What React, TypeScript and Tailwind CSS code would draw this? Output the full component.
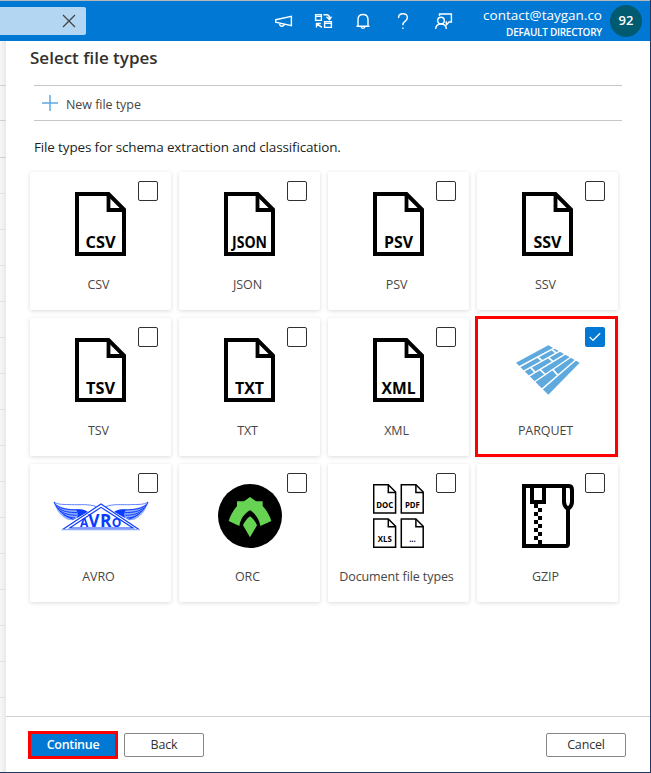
import React from "react";

const iconFont = '"Open Sans", "Noto Sans", sans-serif';

function DocIcon({ text, width }: { text: string; width: number }) {
  return (
    <svg width="51" height="64" viewBox="0 0 51 64" fill="none" stroke="#000" strokeWidth="4">
      <path d="M2 2H33.5L49 17.5V62H2Z" />
      <path d="M33.5 2V18H49" strokeWidth="3.8" />
      <text x="25.5" y="56" textAnchor="middle" textLength={width} lengthAdjust="spacingAndGlyphs" fill="#000" stroke="none" fontSize="15.5" fontWeight="700" fontFamily={iconFont}>
        {text}
      </text>
    </svg>
  );
}

function ParquetIcon() {
  return (
    <svg width="64" height="50" viewBox="573 104 192 150">
      <path d="M573 157L670 105L764 157L670 253Z" fill="#5ea9dd" />
      <g stroke="#fff" strokeWidth="4.5">
        <path d="M582 170L690 112M595 183L707 121M611 198L723 130M628 215L738 140M650 237L752 149" />
        <path d="M638 140L652 152M680 117L694 128M617 171L631 187M670 141L684 154M645 177L662 194M683 177L699 195" strokeWidth="5" />
      </g>
    </svg>
  );
}

function AvroWing() {
  return (
    <g>
      <path d="M87 128C100 137 118 135 140 136C165 137 192 133 214 142" fill="none" stroke="#3d6bff" strokeWidth="2.5" />
      <path d="M86 127C92 151 106 171 128 181L144 183L188 158C178 149 166 149 152 150C130 150 103 145 86 127Z" fill="#8eabff" />
      <path d="M152 150C168 148 180 151 188 157L156 176C160 166 158 157 152 150Z" fill="#0a3cff" />
      <path d="M87 128C98 152 116 170 145 180M94 138C110 150 128 150 154 152M98 145C116 158 132 159 156 160M106 155C124 167 138 167 155 168M116 166C130 174 140 175 151 176" fill="none" stroke="#0a3cff" strokeWidth="3" />
    </g>
  );
}

function AvroIcon() {
  return (
    <svg className="overflow-visible" width="96" height="30" viewBox="84 125 288 90">
      <AvroWing />
      <g transform="translate(456 0) scale(-1 1)">
        <AvroWing />
      </g>
      <path d="M228 132L110 212H344Z" fill="#fff" />
      <path d="M112 211L228 134L343 211" fill="none" stroke="#0a3cff" strokeWidth="3.5" />
      <path d="M110 211H344" stroke="#8eabff" strokeWidth="4" />
      <path d="M134 206L228 144L324 206Z" fill="#fff" stroke="#0a3cff" strokeWidth="3.5" />
      <text y="203" fill="#0a3cff" fontFamily={iconFont} fontWeight="700">
        <tspan x="165" fontSize="36">A</tspan>
        <tspan x="190" fontSize="52">V</tspan>
        <tspan x="225" fontSize="52">R</tspan>
        <tspan x="260" fontSize="36">O</tspan>
      </text>
    </svg>
  );
}

function OrcIcon() {
  return (
    <svg className="ml-px" width="64" height="64" viewBox="54 72 192 192">
      <circle cx="150" cy="168" r="96" fill="#000" />
      <path d="M150 111L168 124H188V138C200 151 209 166 214 183L181 198C178 178 167 161 150 151C132 161 121 178 118 198L86 183C91 166 100 151 111 138V124H132Z" fill="#66d352" />
      <path d="M150 169C160 177 168 187 171 196L150 232L129 196C132 187 140 177 150 169Z" fill="#66d352" />
    </svg>
  );
}

const miniDocs = [
  { x: 0, y: 0, text: "DOC", width: 17 },
  { x: 27.6, y: 0, text: "PDF", width: 15 },
  { x: 0, y: 34.3, text: "XLS", width: 14 },
  { x: 27.6, y: 34.3, text: "...", width: 6.5 },
];

function DocumentsIcon() {
  return (
    <svg width="51" height="64" viewBox="0 0 51 64" fill="none" stroke="#000" strokeWidth="1.5">
      {miniDocs.map((d) => (
        <g key={d.text} transform={`translate(${d.x} ${d.y})`}>
          <path d="M.7 .7H15.3L22.6 8V29H.7Z" />
          <path d="M15.3 .7V8.4H22.6" />
          <text x="11.8" y="23.7" textAnchor="middle" textLength={d.width} lengthAdjust="spacingAndGlyphs" fill="#000" stroke="none" fontSize="8" fontWeight="700" fontFamily={iconFont}>
            {d.text}
          </text>
        </g>
      ))}
    </svg>
  );
}

function GzipIcon() {
  return (
    <svg className="ml-px" width="52" height="64" viewBox="591 72 156 192" fill="none" stroke="#000" strokeWidth="12">
      <path d="M729 148V252Q729 258 723 258H597V78H732Q741 78 741 90V126Q741 138 729 147Q717 138 717 126V80" />
      <path d="M621 78V126H657V78" />
      <path
        d="M627 132h12v12h-12zM639 144h12v12h-12zM627 156h12v12h-12zM639 168h12v12h-12zM627 180h12v12h-12zM639 192h12v12h-12zM627 204h12v12h-12zM639 216h12v12h-12zM627 228h12v12h-12zM639 240h12v12h-12z"
        fill="#000"
        stroke="none"
      />
    </svg>
  );
}

type FileType = { label: string; icon: React.ReactNode; checked?: boolean };

const fileTypes: FileType[] = [
  { label: "CSV", icon: <DocIcon text="CSV" width={30} /> },
  { label: "JSON", icon: <DocIcon text="JSON" width={35} /> },
  { label: "PSV", icon: <DocIcon text="PSV" width={29} /> },
  { label: "SSV", icon: <DocIcon text="SSV" width={28} /> },
  { label: "TSV", icon: <DocIcon text="TSV" width={29} /> },
  { label: "TXT", icon: <DocIcon text="TXT" width={29} /> },
  { label: "XML", icon: <DocIcon text="XML" width={34} /> },
  { label: "PARQUET", icon: <ParquetIcon />, checked: true },
  { label: "AVRO", icon: <AvroIcon /> },
  { label: "ORC", icon: <OrcIcon /> },
  { label: "Document file types", icon: <DocumentsIcon /> },
  { label: "GZIP", icon: <GzipIcon /> },
];

function Card({ item }: { item: FileType }) {
  return (
    <div className="relative flex h-[138px] flex-col items-center rounded-[2px] bg-white pt-5 shadow-[0_1px_4px_rgba(0,0,0,0.15)]">
      <div className="flex h-16 items-center justify-center">{item.icon}</div>
      <div className="mt-5 mr-1 text-[12.5px] leading-[18px] tracking-[-0.1px] whitespace-nowrap text-[#484644]">{item.label}</div>
      {item.checked ? (
        <div className="absolute top-[9px] right-[13px] flex size-5 items-center justify-center rounded-[2px] bg-[#0078d4]">
          <svg width="12" height="10" viewBox="0 0 12 10" fill="none" stroke="#fff" strokeWidth="1.2">
            <path d="M.7 5L4 8.3L11.2 1.2" />
          </svg>
        </div>
      ) : (
        <div className="absolute top-[9px] right-[13px] size-5 rounded-[2px] border border-[#323130] bg-white" />
      )}
      {item.checked && <div className="absolute -top-0.5 right-0 -bottom-px -left-0.5 border-3 border-[#ff0000]" />}
    </div>
  );
}

function Header() {
  return (
    <header className="flex h-[41px] shrink-0 items-center border-t border-[#b8b8b8] bg-[#0078d4] text-white">
      <div className="flex h-7 w-[86px] items-center justify-end rounded-r-[2px] bg-[#b3d7f2] pr-2.5">
        <svg width="14" height="14" viewBox="0 0 14 14" stroke="#444" strokeWidth="1.3">
          <path d="M1 1L13 13M13 1L1 13" />
        </svg>
      </div>
      <svg className="ml-[189px]" width="180" height="20" viewBox="0 0 180 20" fill="none" stroke="#fff" strokeWidth="1.4">
        <path d="M.7 8.7L16.4 5.3V14.7L.7 11.2ZM4.5 12.2C4.5 16 8.5 16 9.5 13.3" />
        <path d="M40.6 3.6H46.4V9.4H40.6ZM40.6 5.4H46.4M49.6 10.6H56.4V16.4H49.6ZM49.6 12.4H56.4" />
        <path d="M48.5 3.8H52Q54.5 4 54.5 8M51.5 5.8L54.5 8.6L56.5 5.6M47 16.4L41.8 12.8M41.5 16.5V12.5H45.8" />
        <path d="M83 15V8.5Q83 3.5 88 3.5T93 8.5V15M81.5 15.2H94.5M86 15.5Q86.3 17.3 88 17.3T90 15.5" />
        <path d="M123.5 7Q123.5 2.7 128 2.7T132.3 6.8Q132.3 8.8 130 10.3T127.9 14.2M127.9 16.5V18" />
        <path d="M164.5 5V3H176.4V11H174L171.3 14V11H170.5" />
        <circle cx="166" cy="9.5" r="3.3" />
        <path d="M160.6 18Q161 13 166 13T171.4 18" />
      </svg>
      <div className="ml-auto flex flex-col items-end pt-[3px]">
        <div className="text-[13.5px] leading-[18px]">contact@taygan.co</div>
        <div className="mt-px text-[10px] leading-[15px] font-semibold tracking-[-0.27px]">DEFAULT DIRECTORY</div>
      </div>
      <div className="mr-2 ml-2 flex size-8 items-center justify-center rounded-full bg-[#005b70] text-[13px] font-semibold">92</div>
    </header>
  );
}

export default function App() {
  return (
    <div className="flex h-[773px] w-[651px] flex-col overflow-hidden border-b border-[#1f3864] bg-white font-['Open_Sans','Noto_Sans',sans-serif]">
      <div className="flex min-h-0 grow flex-col border-r border-[#1f3864]">
        <Header />
        <div className="flex min-h-0 grow">
          <aside className="flex w-1.5 shrink-0 flex-col bg-linear-to-r from-[#f8f8f8] to-[#e9e9e9] pt-11">
            <div className="h-[35px] shrink-0 border-t border-[#d0d0d0]" />
            <div className="h-[38px] shrink-0 border-y border-[#d0d0d0]" />
            {[0, 1, 2, 3, 4, 5, 6, 7, 8, 9, 10, 11, 12, 13, 14].map((i) => (
              <div key={i} className="h-9 shrink-0 border-b border-[#e2e2e2]" />
            ))}
          </aside>
          <main className="flex min-w-0 grow flex-col">
            <h1 className="mt-1 ml-6 text-[17px] leading-[26px] font-semibold text-[#323130]">Select file types</h1>
            <div className="mt-3.5 mr-7 ml-7 flex h-9 items-center border-y border-[#c8c6c4] pl-2">
              <svg width="16" height="16" viewBox="0 0 16 16" stroke="#5ea9e5" strokeWidth="1.5">
                <path d="M8 0V16M0 8H16" />
              </svg>
              <span className="mt-1 ml-2 text-[12.5px] leading-4 tracking-[-0.05px] text-[#484644]">New file type</span>
            </div>
            <p className="mt-4 ml-7 text-[13.5px] leading-5 tracking-[-0.15px] text-[#201f1e]">File types for schema extraction and classification.</p>
            <div className="mt-[15px] ml-6 grid w-[588px] grid-cols-[repeat(4,141px)] gap-2">
              {fileTypes.map((item) => (
                <Card key={item.label} item={item} />
              ))}
            </div>
            <footer className="mt-auto flex h-14 items-center border-t border-[#d2d0ce] pr-6 pl-[22px] text-[12.5px] tracking-[-0.15px] text-[#323130]">
              <button className="h-7 w-[90px] border-3 border-[#ff0000] bg-[#0078d4] pt-px font-semibold tracking-[-0.3px] text-white">Continue</button>
              <button className="ml-1.5 h-6 w-20 rounded-[2px] border border-[#8a8886] pt-px">Back</button>
              <button className="ml-auto h-6 w-20 rounded-[2px] border border-[#8a8886] pt-px">Cancel</button>
            </footer>
          </main>
        </div>
      </div>
    </div>
  );
}
